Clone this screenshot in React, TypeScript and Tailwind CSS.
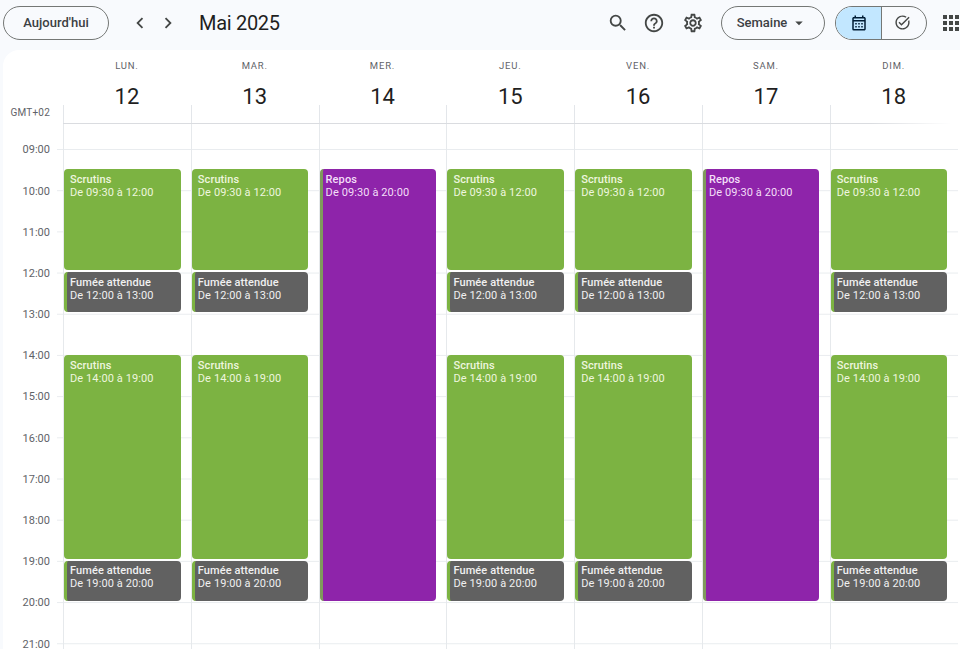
import React from "react";
import {
  MdSearch,
  MdHelpOutline,
  MdOutlineSettings,
  MdApps,
  MdOutlineCalendarMonth,
  MdArrowDropDown,
  MdChevronLeft,
  MdChevronRight,
  MdOutlineTaskAlt,
} from "react-icons/md";

type Ev = { title: string; time: string; kind: "green" | "gray" | "purple"; mt: string; h: string };

const workDay: Ev[] = [
  { title: "Scrutins", time: "De 09:30 à 12:00", kind: "green", mt: "mt-[45px]", h: "h-[101px]" },
  { title: "Fumée attendue", time: "De 12:00 à 13:00", kind: "gray", mt: "mt-[2px]", h: "h-[40px]" },
  { title: "Scrutins", time: "De 14:00 à 19:00", kind: "green", mt: "mt-[43px]", h: "h-[204px]" },
  { title: "Fumée attendue", time: "De 19:00 à 20:00", kind: "gray", mt: "mt-[1.5px]", h: "h-[40px]" },
];
const restDay: Ev[] = [
  { title: "Repos", time: "De 09:30 à 20:00", kind: "purple", mt: "mt-[45px]", h: "h-[431.5px]" },
];

const days = [
  { label: "LUN.", n: 12, ev: workDay },
  { label: "MAR.", n: 13, ev: workDay },
  { label: "MER.", n: 14, ev: restDay },
  { label: "JEU.", n: 15, ev: workDay },
  { label: "VEN.", n: 16, ev: workDay },
  { label: "SAM.", n: 17, ev: restDay },
  { label: "DIM.", n: 18, ev: workDay },
];

const hours = ["09:00","10:00","11:00","12:00","13:00","14:00","15:00","16:00","17:00","18:00","19:00","20:00","21:00"];

const kindClass = {
  green: "bg-[#7cb342] text-[#eef6df] pl-[6px]",
  gray: "bg-[#616161] text-[#f0f0f0] border-l-[3px] border-[#7cb342] pl-[3px]",
  purple: "bg-[#8e24aa] text-[#f3dff8] border-l-[3px] border-[#7f9a5c] pl-[3px]",
};

function Event({ e }: { e: Ev }) {
  return (
    <div className={`${e.mt} ${e.h} w-[116.5px] shrink-0 overflow-hidden rounded-[4px] pt-[3.5px] text-[11px] leading-[13px] tracking-[0.1px] ${kindClass[e.kind]}`}>
      <div className="font-medium">{e.title}</div>
      <div>{e.time}</div>
    </div>
  );
}

export default function App() {
  return (
    <div className="flex h-[649px] w-[960px] flex-col overflow-hidden bg-[#f8fafd] font-['Roboto',sans-serif] text-[#1f1f1f]">
      <header className="flex h-[50px] shrink-0 items-center pb-[5px]">
        <button className="ml-[3px] h-[34px] w-[106px] rounded-full border border-[#747775] text-[13px] font-medium text-[#3c4043]">
          Aujourd'hui
        </button>
        <MdChevronLeft className="ml-[20px] text-[22px] text-[#444746]" />
        <MdChevronRight className="ml-[6px] text-[22px] text-[#444746]" />
        <h1 className="ml-[20px] text-[20px] font-normal leading-none tracking-[-0.3px] text-[#1f1f1f]">Mai 2025</h1>
        <div className="ml-auto flex items-center text-[#444746]">
          <MdSearch className="text-[22px]" />
          <MdHelpOutline className="ml-[14px] text-[22px]" />
          <MdOutlineSettings className="ml-[17px] text-[22px]" />
          <button className="ml-[17px] flex h-[34px] w-[104px] items-center justify-center rounded-full border border-[#747775] pr-[1px] text-[13px] font-medium text-[#3c4043]">
            Semaine
            <MdArrowDropDown className="ml-[3px] text-[18px] text-[#444746]" />
          </button>
          <div className="ml-[10px] flex h-[34px] w-[92px] overflow-hidden rounded-full border border-[#747775]">
            <div className="flex w-[46px] items-center justify-center border-r border-[#747775] bg-[#c2e7ff] pl-[1px] text-[#001d35]">
              <MdOutlineCalendarMonth className="text-[18px]" />
            </div>
            <div className="flex flex-1 items-center justify-center pr-[4px]">
              <MdOutlineTaskAlt className="text-[17px]" />
            </div>
          </div>
          <MdApps className="ml-[12px] mr-[-3px] text-[24px] text-[#444746]" />
        </div>
      </header>

      <main className="ml-[3px] flex min-h-0 flex-1 overflow-hidden rounded-tl-[16px] bg-white">
        <div className="w-[54px] shrink-0">
          <div className="h-[74px] pr-[7px] pt-[56px] text-right text-[10px] leading-[13px] tracking-[0.2px] text-[#5f6368]">GMT+02</div>
          <div className="pt-[6px]">
            {hours.map((h) => (
              <div key={h} className="flex h-[41.2px] items-center justify-end pr-[7px] text-[11px] text-[#5f6368]">
                {h}
              </div>
            ))}
          </div>
        </div>
        <div className="mt-[74px] w-[6px] shrink-0 bg-[linear-gradient(#e9ecef_1px,transparent_1px)] bg-[length:100%_41.2px] bg-[position:0_25px]" />
        <div className="flex min-w-0 flex-1 flex-col">
          <div className="flex h-[74px] shrink-0 flex-col">
            <div className="flex min-h-0 flex-1">
              {days.map((d) => (
                <div key={d.n} className="relative flex w-[127.8px] shrink-0 flex-col items-center">
                  <div className="mt-[10px] text-[9.5px] font-normal leading-[12px] tracking-[0.8px] text-[#5f6368]">{d.label}</div>
                  <div className="mt-[11px] text-[22px] leading-[28px] text-[#1f1f1f]">{d.n}</div>
                  <div className="absolute bottom-0 left-0 h-[18px] w-px bg-[#e3e6ea]" />
                </div>
              ))}
            </div>
            <div className="h-px shrink-0 bg-[linear-gradient(to_right,#dadce0_90%,transparent_99%)]" />
          </div>
          <div className="flex min-h-0 flex-1">
            {days.map((d) => (
              <div
                key={d.n}
                className="flex h-full w-[127.8px] shrink-0 flex-col border-l border-[#e6e9ec] bg-[linear-gradient(#e9ecef_1px,transparent_1px)] bg-[length:100%_41.2px] bg-[position:0_25px]"
              >
                {d.ev.map((e, i) => (
                  <Event key={i} e={e} />
                ))}
              </div>
            ))}
          </div>
        </div>
      </main>
    </div>
  );
}
